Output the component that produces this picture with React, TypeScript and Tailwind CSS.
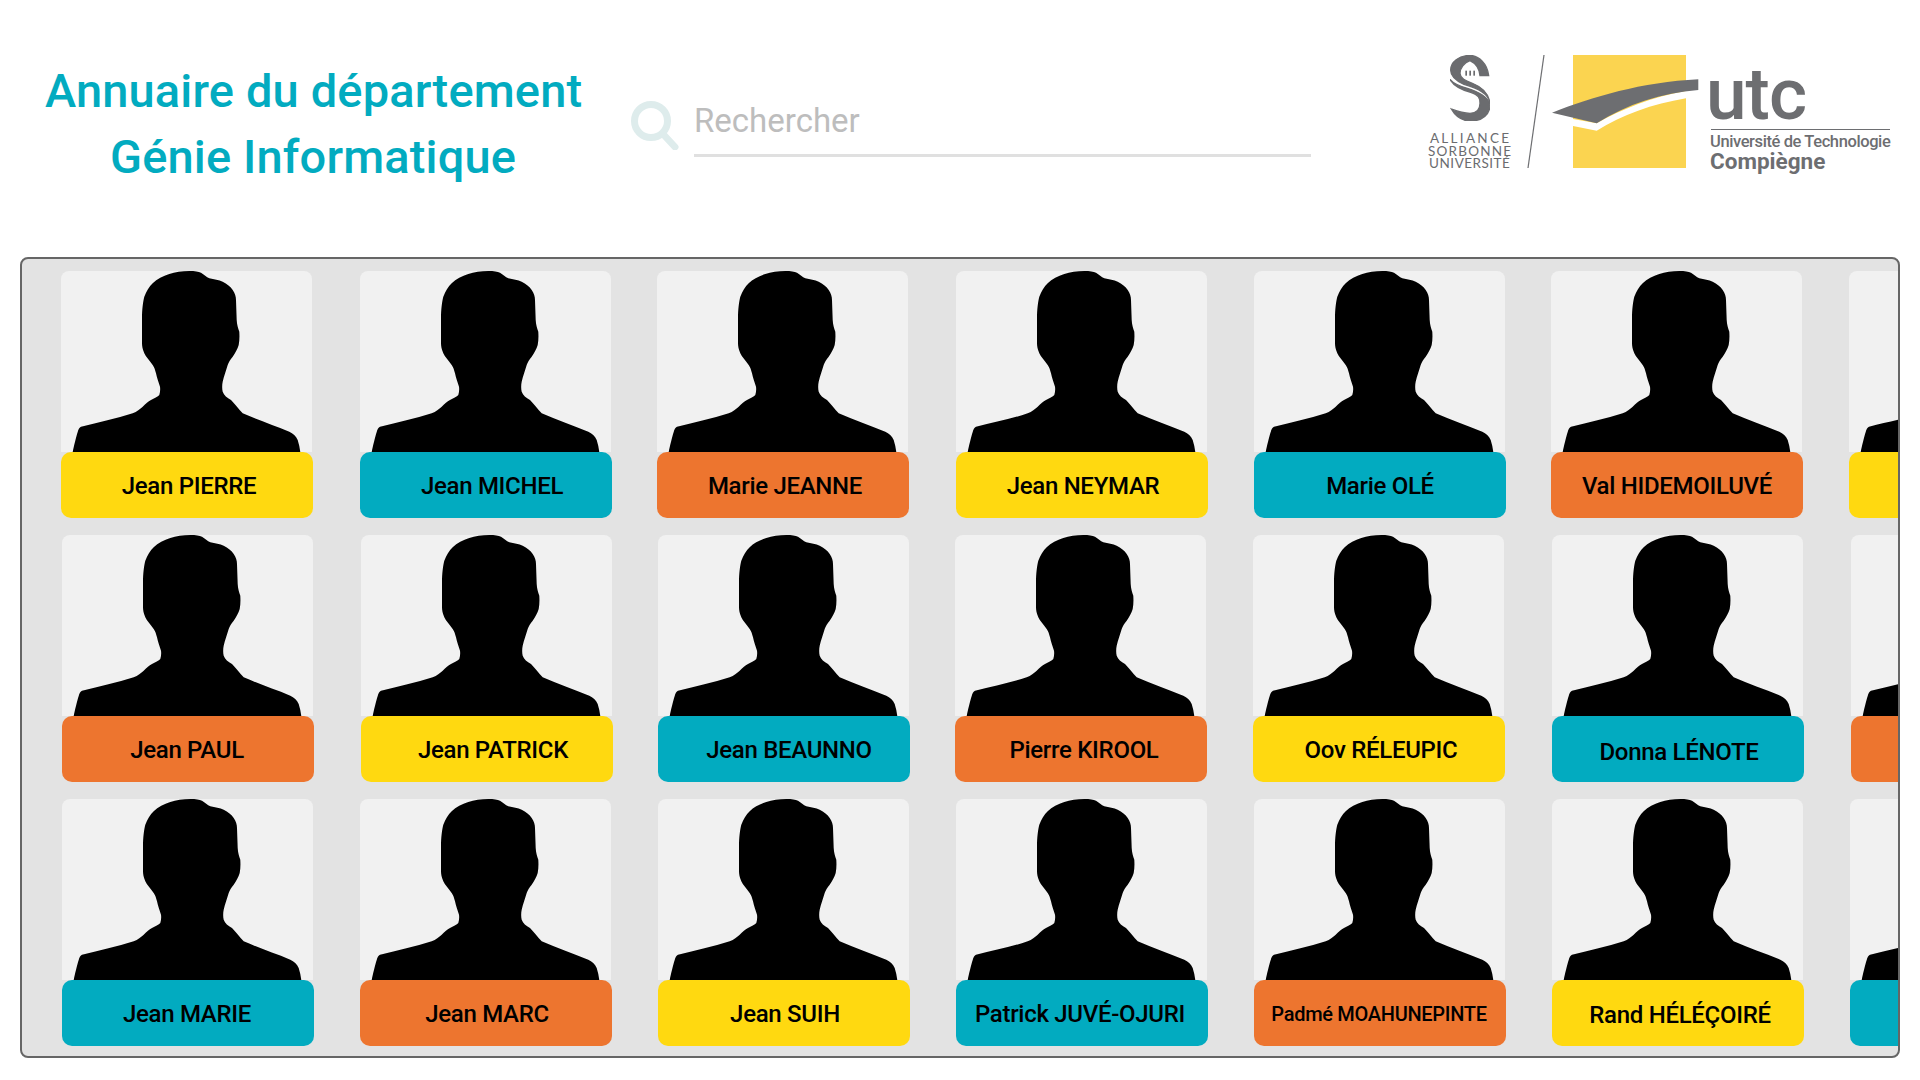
const FONT = "font-['Roboto','Liberation_Sans',sans-serif]";
const Y = 'bg-[#ffd910]';
const T = 'bg-[#02abc0]';
const O = 'bg-[#ed752f]';
type C = { name: string; color: string; small?: boolean; shift?: string; text?: string };
const rows: C[][] = [
  [
    { name: 'Jean PIERRE', color: Y, shift: '-translate-x-px', text: 'translate-x-[2px]' },
    { name: 'Jean MICHEL', color: T, text: 'translate-x-[6px]' },
    { name: 'Marie JEANNE', color: O, shift: '-translate-x-px', text: 'translate-x-[2px]' },
    { name: 'Jean NEYMAR', color: Y, text: 'translate-x-px' },
    { name: 'Marie OLÉ', color: T },
    { name: 'Val HIDEMOILUVÉ', color: O, shift: '-translate-x-px' },
    { name: '', color: Y, shift: '-translate-x-px' },
  ],
  [
    { name: 'Jean PAUL', color: O, text: '-translate-x-px' },
    { name: 'Jean PATRICK', color: Y, shift: 'translate-x-px', text: 'translate-x-[6px]' },
    { name: 'Jean BEAUNNO', color: T, text: 'translate-x-[5px]' },
    { name: 'Pierre KIROOL', color: O, shift: '-translate-x-px', text: 'translate-x-[3px]' },
    { name: 'Oov RÉLEUPIC', color: Y, shift: '-translate-x-px', text: 'translate-x-[2px]' },
    { name: 'Donna LÉNOTE', color: T, text: 'translate-x-px translate-y-[2px]' },
    { name: '', color: O, shift: 'translate-x-px' },
  ],
  [
    { name: 'Jean MARIE', color: T, text: '-translate-x-px' },
    { name: 'Jean MARC', color: O, text: 'translate-x-px' },
    { name: 'Jean SUIH', color: Y, text: 'translate-x-px' },
    { name: 'Patrick JUVÉ-OJURI', color: T, text: '-translate-x-[2px]' },
    { name: 'Padmé MOAHUNEPINTE', color: O, small: true, text: '-translate-x-px' },
    { name: 'Rand HÉLÉÇOIRÉ', color: Y, text: 'translate-x-[2px] translate-y-px' },
    { name: '', color: T },
  ],
];

function Silhouette() {
  return (
    <svg viewBox="0 0 252 181" className="absolute inset-0 w-[252px] h-[181px]">
      <path
        fill="#000"
        d="M11.7 181 C13 175 15 166 16.7 161 C17.5 158 18.5 156.5 20 155.7 C38 151 55 148 71.7 142.3 C76 140.5 79 138 81.7 135.7 C85 132.5 87 130.5 90 129 C93 127 97 126 98.3 124 C99.3 121 99.3 118 99 115.7 C97.5 111 96 107 95 102.3 C94 99 93.5 96.5 91.7 94 C88 89 85 86 83.3 82.3 C81.5 78 81 75 81 72.3 L81 48 C81 38 82 31 83.3 25.7 C85.5 20 88 16 91.7 12.3 C96 8 102 5 108.3 3 C114 1 121 0 128.3 0 C134 0 137.5 .5 140 1.7 C143 3.5 145.5 6 148.3 7.3 C153 8.5 158 9 161.7 10.7 C166 13 169.5 15.5 171.7 19 C174 22.5 175 25.5 175 29 L175.7 49 C176 54 177 57 178.3 60.7 C178.6 66 178.5 70 177.7 74 C176.5 78 174.5 81.5 171.7 85.7 C169 89 167.8 91 166.7 94 C165 100 163 105 161.7 110.7 C161 114 161 118 161.7 120.7 C163 124.5 166 126.5 170 129 C174 133 177.5 138 181.7 142.3 C197 149 212 154 228.3 160.7 C232 162.5 235 165 236.7 169 C238 173 238.8 177 239.3 181 Z"
      />
    </svg>
  );
}

function Card({ name, color, small, shift, text }: C) {
  return (
    <div className={`w-[252px] ${shift ?? ''}`}>
      <div className="relative h-[181px] w-[251px] bg-[#f1f1f1] rounded-t-lg overflow-hidden">
        <Silhouette />
      </div>
      <div
        className={`h-[66px] pt-[2px] rounded-[10px] flex items-center justify-center text-black font-medium tracking-[-0.3px] ${color} ${
          small ? 'text-[20px]' : 'text-[24px]'
        } whitespace-nowrap`}
      >
        <span className={text}>{name}</span>
      </div>
    </div>
  );
}

function SorbonneLogo() {
  return (
    <div className="flex flex-col items-center w-[81px] text-[#6b6c6f]">
      <svg viewBox="88 45 120 198" className="w-[40px] h-[66px]">
        <path
          fill="#6b6c6f"
          stroke="#6b6c6f"
          strokeWidth="4"
          d="M204 107 L178 107 C176 85 165 70 148 62 C130 68 118 85 118 100 C118 115 135 122 155 130 C180 140 203 155 208 190 C205 160 170 145 130 133 C105 122 90 108 90 90 C90 65 115 47 148 46 C175 48 200 70 204 107 Z"
        />
        <path
          fill="#6b6c6f"
          stroke="#6b6c6f"
          strokeWidth="4"
          d="M88 118 C100 140 125 150 150 157 C175 165 178 175 178 190 C178 210 165 220 148 220 C125 220 105 212 92 207 C105 230 125 243 150 243 C185 243 208 222 208 195 C205 170 170 155 140 145 C115 138 98 130 88 118 Z"
        />
        <rect x="134" y="92" width="5" height="15" fill="#6b6c6f" />
        <rect x="146" y="92" width="5" height="15" fill="#6b6c6f" />
        <rect x="158" y="92" width="5" height="15" fill="#6b6c6f" />
      </svg>
      <div className="mt-[11px] flex flex-col items-center text-[13.5px] leading-[12.7px] font-['Lato',sans-serif]">
        <span className="tracking-[2.3px] mr-[-2.3px]">ALLIANCE</span>
        <span className="tracking-[1.2px] mr-[-1.2px]">SORBONNE</span>
        <span className="tracking-[0.5px] mr-[-0.5px]">UNIVERSITÉ</span>
      </div>
    </div>
  );
}

function UtcLogo() {
  return (
    <div className="relative w-[300px] h-[125px]">
      <div className="absolute left-[21px] top-0 w-[113px] h-[113px] bg-[#fbd450]" />
      <svg viewBox="0 0 150 113" className="absolute left-0 top-0 w-[150px] h-[113px]">
        <path fill="#fff" d="M21 71 L44.7 75.7 C70 60 100 49 134 43.3 L134 36 C100 42 70 54 44.7 68.3 L21 64 Z" />
        <path fill="#6d6e71" d="M0 57.7 C40 42 90 27 146.3 24.3 L146.3 35 C110 38 75 49 44.7 68.3 Z" />
      </svg>
      <span className="absolute left-[154px] top-[9px] text-[73px] leading-[60px] text-[#6d6e71] font-medium font-['Roboto',sans-serif] tracking-[-1px]">
        utc
      </span>
      <div className="absolute left-[159px] top-[74px] w-[179px] h-px bg-[#6d6e71]" />
      <span className="absolute left-[158px] top-[79px] text-[16.5px] leading-[16px] font-medium text-[#6d6e71] whitespace-nowrap font-['Roboto',sans-serif] tracking-[-0.4px]">
        Université de Technologie
      </span>
      <span className="absolute left-[158px] top-[95px] text-[22.5px] leading-[22px] font-bold text-[#6d6e71] whitespace-nowrap font-['Roboto',sans-serif]">
        Compiègne
      </span>
    </div>
  );
}

export default function App() {
  return (
    <div className={`w-[1920px] h-[1080px] bg-white overflow-hidden ${FONT}`}>
      <header className="h-[257px] flex items-start relative">
        <h1 className="ml-[45px] mt-[58px] w-[536px] text-center text-[#02abc0] text-[47px] leading-[66px] font-medium tracking-[0.15px] whitespace-nowrap">
          Annuaire du département
          <br />
          Génie Informatique
        </h1>
        <div className="ml-[49px] mt-[100px] flex items-start">
          <svg viewBox="0 0 50 50" className="w-[50px] h-[50px]">
            <circle cx="21" cy="21" r="16.5" fill="none" stroke="#deecec" strokeWidth="7" />
            <path d="M33 34 L45 47" stroke="#deecec" strokeWidth="7" strokeLinecap="round" />
          </svg>
          <div className="ml-[14px] w-[617px] h-[57px] border-b-[3px] border-[#e0e0e0] text-[33px] leading-[42px] text-[#bdbdbd]">
            Rechercher
          </div>
        </div>
        <div className="absolute left-[1429px] top-[55px] flex items-start">
          <SorbonneLogo />
          <svg viewBox="0 0 18 113" className="ml-[17px] w-[18px] h-[113px]">
            <path d="M17 0 L1 113" stroke="#6d6e71" strokeWidth="1.2" />
          </svg>
          <div className="ml-[7px]">
            <UtcLogo />
          </div>
        </div>
      </header>
      <main className="ml-5 w-[1880px] h-[801px] border-2 border-[#666666] rounded-lg bg-[#e3e3e3] overflow-hidden pl-10 pt-3">
        <div className="flex flex-col gap-y-[17px]">
          {rows.map((row, i) => (
            <div key={i} className="flex gap-x-[46px] w-max">
              {row.map((c, j) => (
                <Card key={j} {...c} />
              ))}
            </div>
          ))}
        </div>
      </main>
    </div>
  );
}
